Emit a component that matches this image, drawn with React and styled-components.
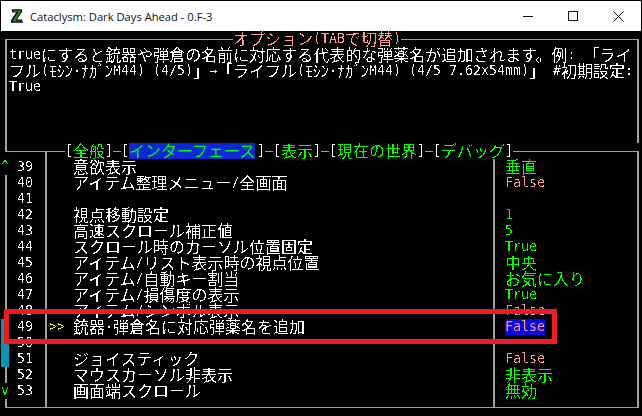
import React from "react";
import styled, { createGlobalStyle } from "styled-components";

const options = [
  { no: 39, label: "意欲表示", value: "垂直", on: true },
  { no: 40, label: "アイテム整理メニュー/全画面", value: "False" },
  { no: 41 },
  { no: 42, label: "視点移動設定", value: "1", on: true },
  { no: 43, label: "高速スクロール補正値", value: "5", on: true },
  { no: 44, label: "スクロール時のカーソル位置固定", value: "True", on: true },
  { no: 45, label: "アイテム/リスト表示時の視点位置", value: "中央", on: true },
  { no: 46, label: "アイテム/自動キー割当", value: "お気に入り", on: true },
  { no: 47, label: "アイテム/損傷度の表示", value: "True", on: true },
  { no: 48, label: "アイテム/シンボル表示", value: "False" },
  { no: 49, label: "銃器･弾倉名に対応弾薬名を追加", value: "False", current: true },
  { no: 50 },
  { no: 51, label: "ジョイスティック", value: "False" },
  { no: 52, label: "マウスカーソル非表示", value: "非表示", on: true },
  { no: 53, label: "画面端スクロール", value: "無効", on: true },
];

const description = [
  "trueにすると銃器や弾倉の名前に対応する代表的な弾薬名が追加されます。例: 「ライ",
  "フル(ﾓｼﾝ･ﾅｶﾞﾝM44) (4/5)」→「ライフル(ﾓｼﾝ･ﾅｶﾞﾝM44) (4/5 7.62x54mm)」 #初期設定:",
  "True",
];

// 全角は16px、半角は8pxのセルに合わせる
function TermText({ text }) {
  const runs = text.match(/[\u3000-\u30ff\u4e00-\u9fff]+|[\uff61-\uff9f]+|[^\u3000-\u30ff\u4e00-\u9fff\uff61-\uff9f]+/g) || [];
  return runs.map((run, i) => {
    const kind = /^[\u3000-\u30ff\u4e00-\u9fff\uff61-\uff9f]/.test(run) ? "cjk" : "latin";
    return (
      <Run key={i} $kind={kind}>
        {run}
      </Run>
    );
  });
}

function Tab({ at, label, active }) {
  return (
    <>
      <Chunk $at={at - 1} $tone="white">[</Chunk>
      <Chunk $at={at} $tone="green" $bg={active ? "#0b27d8" : undefined}>
        <TermText text={label} />
      </Chunk>
      <Chunk $at={at + label.length * 2} $tone="white">]</Chunk>
    </>
  );
}

export default function App() {
  return (
    <Window>
      <GlobalStyle />
      <svg width="0" height="0" style={{ position: "absolute" }}>
        <filter id="crisp" x="0" y="0" width="100%" height="100%" colorInterpolationFilters="sRGB">
          <feComponentTransfer>
            <feFuncA type="discrete" tableValues="0 0 0 1 1" />
          </feComponentTransfer>
        </filter>
      </svg>

      <TitleBar>
        <AppIcon viewBox="0 0 14 18">
          <path d="M1 1h12v3L7 13h6l1 4H0v-3l6-9H2L1 4z" fill="#0a0a0a" />
          <path d="M3 2.5h8.5v1.5L5 14.5h7.5v1H2v-1L9 4H3z" fill="#1f8f2a" />
        </AppIcon>
        <Title>Cataclysm: Dark Days Ahead - 0.F-3</Title>
        <Controls>
          <ControlButton>
            <svg width="11" height="11" viewBox="0 0 11 11">
              <path d="M0 5.5h10" stroke="#111" fill="none" />
            </svg>
          </ControlButton>
          <ControlButton>
            <svg width="11" height="11" viewBox="0 0 11 11">
              <rect x="0.5" y="0.5" width="9" height="9" stroke="#111" fill="none" />
            </svg>
          </ControlButton>
          <ControlButton>
            <svg width="11" height="11" viewBox="0 0 11 11">
              <path d="M0.5 0.5l10 10M10.5 0.5l-10 10" stroke="#111" fill="none" />
            </svg>
          </ControlButton>
        </Controls>
      </TitleBar>

      <Terminal>
        <Screen>
          {/* 上枠 */}
          <Row>
            <Rule $at={0} $span={29} $inset />
            <VBar $at={0} $part="bottom" />
            <Chunk $at={29} $tone="salmon">
              <TermText text="オプション(TABで切替)" />
            </Chunk>
            <Rule $at={50} $span={30} $end />
            <VBar $at={79} $part="bottom" />
          </Row>

          {/* 説明文 */}
          {[0, 1, 2, 3, 4, 5].map((i) => (
            <Row key={i}>
              <VBar $at={0} />
              {description[i] && (
                <Chunk $at={1} $tone="white">
                  <TermText text={description[i]} />
                </Chunk>
              )}
              <VBar $at={79} />
            </Row>
          ))}

          {/* タブ */}
          <Row>
            <VBar $at={0} $part="top" />
            <Rule $at={0} $span={8} $inset />
            <VBar $at={5} $part="bottom" />
            <Tab at={9} label="全般" />
            <Rule $at={14} $span={1} />
            <Tab at={16} label="インターフェース" active />
            <Rule $at={33} $span={1} />
            <Tab at={35} label="表示" />
            <Rule $at={40} $span={1} />
            <Tab at={42} label="現在の世界" />
            <Rule $at={53} $span={1} />
            <Tab at={55} label="デバッグ" />
            <Rule $at={64} $span={16} $end />
            <VBar $at={79} $part="bottom" />
          </Row>

          {/* オプション一覧 */}
          {options.map((opt, i) => (
            <Row key={opt.no}>
              {i === 0 && <Chunk $at={0} $tone="green">^</Chunk>}
              {i === options.length - 1 && <Chunk $at={0} $tone="green">v</Chunk>}
              {i > 0 && i < options.length - 1 && i < 10 && <VBar $at={0} />}
              {i === 13 && <VBar $at={0} />}
              {i >= 10 && i <= 12 && <Thumb />}
              <Chunk $at={2} $tone="white">{opt.no}</Chunk>
              <VBar $at={5} />
              {opt.current && <Chunk $at={6} $tone="yellow">&gt;&gt;</Chunk>}
              {opt.label && (
                <Chunk $at={9} $tone="white">
                  <TermText text={opt.label} />
                </Chunk>
              )}
              <VBar $at={61} />
              {opt.value && (
                <Chunk
                  $at={63}
                  $tone={opt.on ? "green" : "salmon"}
                  $bg={opt.current ? "#0808e0" : undefined}
                >
                  <TermText text={opt.value} />
                </Chunk>
              )}
              <VBar $at={79} />
            </Row>
          ))}

          {/* 下枠 */}
          <Row>
            <VBar $at={0} $part="top" />
            <VBar $at={5} $part="top" />
            <VBar $at={61} $part="top" />
            <VBar $at={79} $part="top" />
            <Rule $at={0} $span={80} $inset $end />
          </Row>
        </Screen>
      </Terminal>

      <Callout />
    </Window>
  );
}

const tones = {
  white: "#ffffff",
  green: "#00ff00",
  salmon: "#ff9696",
  yellow: "#ffff00",
};

const GlobalStyle = createGlobalStyle`
  html, body {
    margin: 0;
    padding: 0;
    background: #000;
  }
`;

const Window = styled.div`
  position: relative;
  width: 640px;
  height: 414px;
  border: 1px solid #000;
  display: flex;
  flex-direction: column;
  overflow: hidden;
`;

const TitleBar = styled.div`
  height: 30px;
  background: #fff;
  display: flex;
  align-items: center;
  padding-left: 10px;
`;

const AppIcon = styled.svg`
  width: 12px;
  height: 16px;
  margin-right: 7px;
  margin-top: -1px;
`;

const Title = styled.div`
  font-family: "Open Sans", "Noto Sans", sans-serif;
  font-size: 11.2px;
  color: #111;
  white-space: nowrap;
`;

const Controls = styled.div`
  margin-left: auto;
  display: flex;
`;

const ControlButton = styled.div`
  width: 45px;
  height: 30px;
  display: flex;
  align-items: center;
  justify-content: center;
`;

const Terminal = styled.div`
  width: 640px;
  height: 384px;
  background: #000;
`;

const Screen = styled.div`
  display: flex;
  flex-direction: column;
  filter: url(#crisp);
`;

const Row = styled.div`
  display: grid;
  grid-template-columns: repeat(80, 8px);
  grid-template-rows: 16px;
  height: 16px;
`;

const Chunk = styled.div`
  grid-row: 1;
  grid-column: ${(p) => p.$at + 1} / span 1;
  justify-self: start;
  height: 16px;
  width: max-content;
  white-space: pre;
  display: flex;
  align-items: flex-start;
  color: ${(p) => tones[p.$tone]};
  background: ${(p) => p.$bg || "transparent"};
  font-family: "DejaVu Sans Mono", monospace;
  font-size: 13.33px;
  line-height: 16px;
  letter-spacing: -0.03px;
`;

const Run = styled.span`
  display: block;
  font-family: ${(p) =>
    p.$kind === "cjk"
      ? '"Noto Sans CJK JP", sans-serif'
      : '"DejaVu Sans Mono", monospace'};
  font-size: ${(p) => (p.$kind === "cjk" ? "16px" : "13.33px")};
  line-height: ${(p) => (p.$kind === "cjk" ? "14px" : "16px")};
  letter-spacing: ${(p) => (p.$kind === "cjk" ? "0" : "-0.03px")};
`;

const VBar = styled.div`
  grid-row: 1;
  grid-column: ${(p) => p.$at + 1} / span 1;
  width: 2px;
  margin-left: 4px;
  margin-top: ${(p) => (p.$part === "bottom" ? "8px" : "0")};
  height: ${(p) => (p.$part ? "8px" : "16px")};
  background: #a0a0a0;
`;

const Rule = styled.div`
  grid-row: 1;
  grid-column: ${(p) => p.$at + 1} / span ${(p) => p.$span};
  height: 1px;
  margin-top: 8px;
  margin-left: ${(p) => (p.$inset ? "4px" : "0")};
  margin-right: ${(p) => (p.$end ? "2px" : "0")};
  background: #a0a0a0;
`;

const Thumb = styled.div`
  grid-row: 1;
  grid-column: 1 / span 1;
  background: #0a93b5;
`;

const Callout = styled.div`
  position: absolute;
  left: 3px;
  top: 308px;
  width: 543px;
  height: 25px;
  border: 5px solid #ed1c24;
`;
